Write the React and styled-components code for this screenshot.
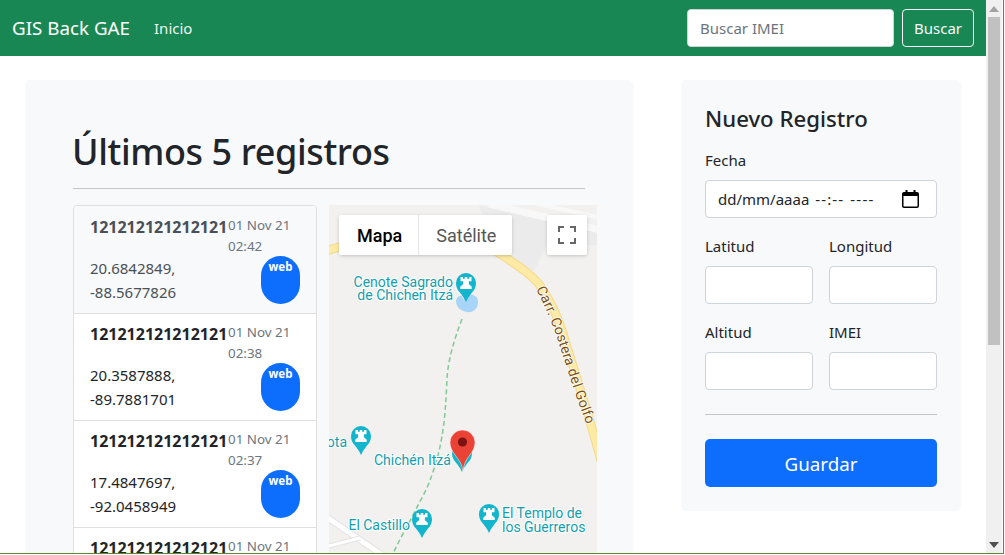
import React from "react";
import styled, { createGlobalStyle } from "styled-components";

const registros = [
  { imei: "121212121212121", fecha: "01 Nov 21", hora: "02:42", lat: "20.6842849,", lng: "-88.5677826", activo: true },
  { imei: "121212121212121", fecha: "01 Nov 21", hora: "02:38", lat: "20.3587888,", lng: "-89.7881701" },
  { imei: "121212121212121", fecha: "01 Nov 21", hora: "02:37", lat: "17.4847697,", lng: "-92.0458949" },
  { imei: "121212121212121", fecha: "01 Nov 21" },
];

const GlobalStyle = createGlobalStyle`
  html, body {
    margin: 0;
    overflow: hidden;
    background: #fff;
  }
  * {
    box-sizing: border-box;
  }
  body {
    font-family: "Noto Sans", "Open Sans", sans-serif;
    font-size: 15px;
    line-height: 24px;
    color: #212529;
  }
`;

const Frame = styled.div`
  display: flex;
  width: 1004px;
  height: 554px;
  border-right: 1px solid #5a8a2c;
  border-bottom: 1px solid #5a8a2c;
`;

const Viewport = styled.div`
  flex: 1;
  min-width: 0;
  overflow: hidden;
`;

const Scrollbar = styled.div`
  width: 16px;
  margin-right: 1px;
  padding: 0 2px;
  background: #f0f0f0;
  display: flex;
  flex-direction: column;
  align-items: stretch;
`;

const ScrollArrow = styled.div`
  height: 17px;
  display: flex;
  align-items: center;
  justify-content: center;
  flex: none;
`;

const ScrollThumb = styled.div`
  height: 328px;
  background: #c1c1c1;
`;

const ScrollSpace = styled.div`
  flex: 1;
`;

const Navbar = styled.nav`
  height: 56px;
  background: #198754;
  display: flex;
  align-items: center;
  padding: 0 12px;
`;

const Brand = styled.a`
  font-size: 18.8px;
  color: #fff;
  margin-right: 24px;
`;

const NavLink = styled.a`
  font-size: 15px;
  color: rgba(255, 255, 255, 0.95);
`;

const SearchForm = styled.form`
  margin-left: auto;
  display: flex;
  gap: 8px;
`;

const Input = styled.input`
  display: block;
  width: ${(p) => p.$width || "100%"};
  height: 38px;
  padding: 6px 12px;
  font: inherit;
  color: #212529;
  background: #fff;
  border: 1px solid #ced4da;
  border-radius: 4px;

  &::placeholder {
    color: #6c757d;
    opacity: 1;
  }
`;

const OutlineButton = styled.button`
  width: 72px;
  height: 38px;
  padding: 0;
  font: inherit;
  color: #f8f9fa;
  background: transparent;
  border: 1px solid #f8f9fa;
  border-radius: 4px;
`;

const Main = styled.main`
  display: grid;
  grid-template-columns: 608px 280px;
  gap: 48px;
  align-items: start;
  padding: 24px 0 0 25px;
`;

const RecordsCard = styled.section`
  background: #f8f9fa;
  border-radius: 5px;
  padding: 48px;
`;

const Title = styled.h1`
  margin: 0 0 12px -1px;
  font-size: 36px;
  line-height: 48px;
  letter-spacing: -0.4px;
  font-weight: 500;
`;

const Rule = styled.hr`
  margin: ${(p) => p.$margin || "0"};
  border: 0;
  height: 1px;
  background: #c4c5c7;
`;

const RecordsRow = styled.div`
  display: grid;
  grid-template-columns: 244px 268px;
  gap: 12px;
  width: 524px;
`;

const RecordList = styled.ul`
  margin: 0;
  padding: 0;
  list-style: none;
  border: 1px solid #dfdfdf;
  border-radius: 4px;
  background: #fff;
  overflow: hidden;
`;

const RecordItem = styled.li`
  padding: 8px 16px;
  height: 107px;
  color: ${(p) => (p.$active ? "#495057" : "#212529")};
  background: ${(p) => (p.$active ? "#f8f9fa" : "#fff")};

  &:first-child {
    padding-top: 9px;
  }

  & + & {
    border-top: 1px solid #dfdfdf;
  }
`;

const RecordHead = styled.div`
  display: flex;
  height: 41px;
`;

const Imei = styled.div`
  flex: none;
  width: 138px;
  font-size: 16px;
  font-weight: 700;
  white-space: nowrap;
`;

const RecordDate = styled.small`
  display: block;
  flex: 1;
  font-size: 13.4px;
  line-height: 21px;
  color: #6c757d;
`;

const RecordBody = styled.div`
  display: flex;
  justify-content: space-between;
`;

const Badge = styled.span`
  width: 39px;
  height: 48px;
  padding-top: 2px;
  border-radius: 20px;
  background: #0d6efd;
  color: #fff;
  font-size: 11.5px;
  line-height: 18px;
  font-weight: 700;
  text-align: center;
`;

const MapBox = styled.div`
  position: relative;
  height: 400px;
  overflow: hidden;
  background: #f2f1ef;
  font-family: Roboto, sans-serif;
`;

const MapCanvas = styled.svg`
  display: block;
`;

const MapTypes = styled.div`
  position: absolute;
  top: 10px;
  left: 10px;
  display: flex;
  height: 40px;
  background: #fff;
  border-radius: 2px;
  box-shadow: rgba(0, 0, 0, 0.3) 0 1px 4px -1px;
`;

const MapType = styled.button`
  padding: 0 16px 0 17px;
  border: 0;
  background: transparent;
  font-family: Roboto, sans-serif;
  font-size: 18px;
  font-weight: ${(p) => (p.$selected ? 500 : 400)};
  color: ${(p) => (p.$selected ? "#000" : "#565656")};

  &:first-child {
    padding-left: 18px;
  }

  & + & {
    border-left: 1px solid #e6e6e6;
  }
`;

const FullscreenButton = styled.button`
  position: absolute;
  top: 10px;
  right: 10px;
  width: 40px;
  height: 40px;
  padding: 0;
  border: 0;
  border-radius: 2px;
  background: #fff;
  box-shadow: rgba(0, 0, 0, 0.3) 0 1px 4px -1px;
  display: flex;
  align-items: center;
  justify-content: center;
`;

const FormCard = styled.form`
  background: #f8f9fa;
  border-radius: 5px;
  padding: 24px;
`;

const FormTitle = styled.h4`
  margin: 0 0 15px;
  font-size: 22.2px;
  line-height: 29px;
  font-weight: 500;
`;

const Field = styled.div`
  margin-bottom: ${(p) => p.$mb || "16px"};
`;

const Label = styled.label`
  display: block;
  margin-bottom: 8px;
`;

const FieldRow = styled.div`
  display: grid;
  grid-template-columns: 108px 108px;
  gap: 16px;
`;

const DateField = styled.div`
  height: 38px;
  padding: 0 17px 0 12px;
  display: flex;
  align-items: center;
  justify-content: space-between;
  background: #fff;
  border: 1px solid #ced4da;
  border-radius: 4px;
  white-space: pre;
`;

const DateText = styled.span`
  display: flex;
  gap: ${(p) => p.$gap || "6px"};
`;

const DatePart = styled.span`
  letter-spacing: ${(p) => p.$spacing || "0"};
`;

const SaveButton = styled.button`
  display: block;
  width: 100%;
  height: 48px;
  padding: 2px 0 0;
  border: 0;
  border-radius: 5px;
  background: #0d6efd;
  color: #fff;
  font-family: inherit;
  font-size: 18.8px;
`;

const PinText = styled.text`
  font-family: Roboto, sans-serif;
  font-size: 14px;
  fill: #129eaf;
  stroke: #fff;
  stroke-width: 2px;
  paint-order: stroke;
  text-anchor: ${(p) => p.$anchor || "start"};
`;

const RoadText = styled.text`
  font-family: Roboto, sans-serif;
  font-size: 14px;
  letter-spacing: 0.2px;
  fill: #7b4f12;
  stroke: #fff;
  stroke-width: 1.5px;
  paint-order: stroke;
`;

const Teardrop = "M-10 0a10 10 0 0 1 20 0c0 6-3 8-5.5 11.5C2.5 14 1 16.5 0 19c-1-2.5-2.5-5-4.5-7.5C-7 8-10 6-10 0z";

function RookPin({ x, y, plain }) {
  // x, y = centro de la cabeza del pin
  return (
    <g transform={`translate(${x} ${y})`}>
      <path d={Teardrop} fill="#12b5cb" />
      {!plain && (
        <path d="M-5.5-6h2.4v1.800h1.900V-6h2.400v1.800h1.900V-6h2.400v4.200H2.900v3.600h1.500v1.500h1.300v2.700H-5.700V3.300h1.300V1.800h1.500v-3.600h-2.600z" fill="#fff" />
      )}
    </g>
  );
}

function MapDrawing() {
  const carretera = "M-3 46C50 28 130 20 171 49C190 61 200 68 209 78C222 95 230 115 236 135C245 165 260 210 272 256";
  return (
    <MapCanvas width="268" height="400" viewBox="0 0 268 400">
      <path d="M150 0L268 28V40L218 40L205 66L190 60L165 42z" fill="#ebebeb" />
      <path d="M160-1L268 24" stroke="#f8f8f8" strokeWidth="7" fill="none" />
      <path d="M205-2L268 12" stroke="#f8f8f8" strokeWidth="4" fill="none" />

      <path d={carretera} stroke="#f5d98a" strokeWidth="9" fill="none" />
      <path d={carretera} stroke="#fdeaa5" strokeWidth="7" fill="none" />
      <path id="costera" d="M207 84C218 105 226 125 232 145C240 170 248 195 260 226" fill="none" />
      <RoadText>
        <textPath href="#costera">Carr. Costera del Golfo</textPath>
      </RoadText>

      <path d="M-4 311L56 352" stroke="#e3e3e3" strokeWidth="7" fill="none" />
      <path d="M-4 311L56 352" stroke="#fff" strokeWidth="5" fill="none" />
      <path d="M-4 342L31 333" stroke="#e3e3e3" strokeWidth="5" fill="none" />
      <path d="M-4 342L31 333" stroke="#fff" strokeWidth="3" fill="none" />

      <path d="M135 97c-2-6 2-9 5-8 5 1 9 2 9 8 0 7-5 11-11 10-6-1-10-4-11-10 0-4 3-7 6-6z" fill="#a8d5f7" />
      <path d="M133 114C125 135 119 155 118 174C117 195 116 215 113 231C110 250 105 265 100 278C96 288 91 296 85 308C78 322 70 335 64 349" stroke="#81c995" strokeWidth="1.500" strokeDasharray="5 3" fill="none" />

      <RookPin x={137} y={78} />
      <PinText x="124" y="82" $anchor="end">Cenote Sagrado</PinText>
      <PinText x="124" y="95" $anchor="end">de Chichen Itzá</PinText>

      <RookPin x={32} y={231} />
      <PinText x="18" y="242" $anchor="end">ota</PinText>

      <RookPin x={133} y={248} plain />
      <PinText x="45" y="260">Chichén Itzá</PinText>

      <RookPin x={93} y={314} />
      <PinText x="81" y="325" $anchor="end">El Castillo</PinText>

      <RookPin x={160} y={309} />
      <PinText x="173" y="313">El Templo de</PinText>
      <PinText x="173" y="327">los Guerreros</PinText>

      <path d="M134 266c-1-7-4-11-7.500-15.500C123 246 121 242 121 237.500a12.500 12.500 0 0 1 25 0c0 4.500-2 8.500-5.500 13C137 255 135 259 134 266z" fill="#ea4335" stroke="#fff" strokeWidth="0.5" />
      <circle cx="133.500" cy="237" r="4.600" fill="#7c1313" />
    </MapCanvas>
  );
}

export default function App() {
  return (
    <Frame>
      <GlobalStyle />
      <Viewport>
        <Navbar>
          <Brand>GIS Back GAE</Brand>
          <NavLink>Inicio</NavLink>
          <SearchForm>
            <Input $width="207px" placeholder="Buscar IMEI" />
            <OutlineButton type="button">Buscar</OutlineButton>
          </SearchForm>
        </Navbar>
        <Main>
          <RecordsCard>
            <Title>Últimos 5 registros</Title>
            <Rule $margin="0 0 16px" />
            <RecordsRow>
              <RecordList>
                {registros.map((r, i) => (
                  <RecordItem key={i} $active={r.activo}>
                    <RecordHead>
                      <Imei>{r.imei}</Imei>
                      <RecordDate>
                        {r.fecha}
                        <br />
                        {r.hora}
                      </RecordDate>
                    </RecordHead>
                    {r.lat && (
                      <RecordBody>
                        <div>
                          {r.lat}
                          <br />
                          {r.lng}
                        </div>
                        <Badge>web</Badge>
                      </RecordBody>
                    )}
                  </RecordItem>
                ))}
              </RecordList>
              <MapBox>
                <MapDrawing />
                <MapTypes>
                  <MapType type="button" $selected>Mapa</MapType>
                  <MapType type="button">Satélite</MapType>
                </MapTypes>
                <FullscreenButton type="button" aria-label="Pantalla completa">
                  <svg width="18" height="18" viewBox="0 0 18 18">
                    <path d="M0 0h6v2H2v4H0zM12 0h6v6h-2V2h-4zM0 12h2v4h4v2H0zM16 12h2v6h-6v-2h4z" fill="#666" />
                  </svg>
                </FullscreenButton>
              </MapBox>
            </RecordsRow>
          </RecordsCard>
          <FormCard>
            <FormTitle>Nuevo Registro</FormTitle>
            <Field $mb="16px">
              <Label>Fecha</Label>
              <DateField>
                <DateText>
                  <DatePart>dd/mm/aaaa</DatePart>
                  <DatePart $spacing="1.1px">--:--</DatePart>
                  <DatePart $spacing="1.3px">----</DatePart>
                </DateText>
                <svg width="17" height="18" viewBox="0 0 17 18">
                  <path d="M3.500 0h2v2h6V0h2v2h1.500A2 2 0 0 1 17 4v12a2 2 0 0 1-2 2H2a2 2 0 0 1-2-2V4a2 2 0 0 1 2-2h1.500zM1.500 6v10c0 .3.200.5.500.5h13c.3 0 .5-.2.500-.5V6z" fill="#000" />
                </svg>
              </DateField>
            </Field>
            <FieldRow>
              <Field>
                <Label>Latitud</Label>
                <Input />
              </Field>
              <Field>
                <Label>Longitud</Label>
                <Input />
              </Field>
            </FieldRow>
            <FieldRow>
              <Field $mb="0">
                <Label>Altitud</Label>
                <Input />
              </Field>
              <Field $mb="0">
                <Label>IMEI</Label>
                <Input />
              </Field>
            </FieldRow>
            <Rule $margin="24px 0" />
            <SaveButton type="button">Guardar</SaveButton>
          </FormCard>
        </Main>
      </Viewport>
      <Scrollbar>
        <ScrollArrow>
          <svg width="10" height="6" viewBox="0 0 10 6"><path d="M5 0l5 6H0z" fill="#a3a3a3" /></svg>
        </ScrollArrow>
        <ScrollThumb />
        <ScrollSpace />
        <ScrollArrow>
          <svg width="10" height="6" viewBox="0 0 10 6"><path d="M0 0h10L5 6z" fill="#505050" /></svg>
        </ScrollArrow>
      </Scrollbar>
    </Frame>
  );
}
